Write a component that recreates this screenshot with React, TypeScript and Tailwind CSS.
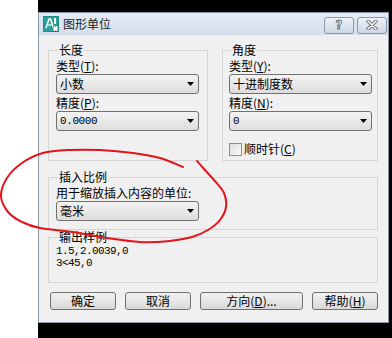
import React from 'react';

// points of the red hand-drawn loop (screen coords)
const LOOP: [number, number][] = [
  [183, 167], [160, 158], [133, 153], [100, 150], [70, 150], [43, 153], [22, 163], [7, 178],
  [1, 196], [8, 212], [22, 222], [40, 228], [73, 232], [107, 238], [140, 242], [170, 241],
  [192, 237], [208, 230], [220, 220], [226, 207], [224, 193], [214, 180], [204, 169], [197, 161],
];

function smoothPath(pts: [number, number][]) {
  let d = `M${pts[0][0]},${pts[0][1]}`;
  for (let i = 0; i < pts.length - 1; i++) {
    const p0 = pts[i - 1] || pts[i];
    const p1 = pts[i];
    const p2 = pts[i + 1];
    const p3 = pts[i + 2] || p2;
    const c1 = [p1[0] + (p2[0] - p0[0]) / 6, p1[1] + (p2[1] - p0[1]) / 6];
    const c2 = [p2[0] - (p3[0] - p1[0]) / 6, p2[1] - (p3[1] - p1[1]) / 6];
    d += ` C${c1[0]},${c1[1]} ${c2[0]},${c2[1]} ${p2[0]},${p2[1]}`;
  }
  return d;
}

const Legend: React.FC<{ children: React.ReactNode }> = ({ children }) => (
  <legend className="ml-[2px] px-[1px] leading-[14px]">{children}</legend>
);

const Combo: React.FC<{ value: string; mono?: boolean }> = ({ value, mono }) => (
  <div className="flex items-center justify-between w-[143px] h-[20px] rounded-[3px] border border-[#707070] bg-gradient-to-b from-[#f3f3f3] to-[#dddddd] pl-[3px] pr-[4px]">
    <span className={mono ? "font-[family-name:'Liberation_Mono',monospace] text-[11px] tracking-[-0.4px]" : ''}>{value}</span>
    <svg width="7" height="4" viewBox="0 0 7 4">
      <path d="M0 0h7L3.5 4z" fill="#000" />
    </svg>
  </div>
);

const Btn: React.FC<{ w: string; children: React.ReactNode }> = ({ w, children }) => (
  <button className={`${w} h-[18px] rounded-[3px] border border-[#707070] bg-gradient-to-b from-[#f2f2f2] to-[#d9d9d9] leading-[16px] text-center`}>
    {children}
  </button>
);

const Key: React.FC<{ k: string }> = ({ k }) => (
  <>
    (<span className="underline underline-offset-1">{k}</span>)
  </>
);

export default function App() {
  return (
    <div className="relative w-[392px] h-[338px] flex bg-white text-[12px] text-black font-[family-name:'Noto_Sans_CJK_SC','Noto_Sans',sans-serif] overflow-hidden">
      <div className="w-[38px] shrink-0 bg-white" />
      <div className="flex-1 flex flex-col bg-black">
        <div className="h-[12px] shrink-0" />
        <div className="w-[351px] h-[311px] border border-[#8d99a8] bg-[#f0f0f0] flex flex-col">
          {/* Title bar */}
          <div className="h-[22px] shrink-0 flex items-center pl-[4px] pr-[1px] bg-gradient-to-b from-[#e4ebf4] to-[#d4deea]">
            <svg width="16" height="16" viewBox="0 0 16 16">
              <rect x="0" y="0" width="16" height="16" fill="#1f8a86" />
              <rect x="1" y="1" width="14" height="14" fill="#2aa39c" />
              <path d="M3 12L6 3h1.5l3 9" stroke="#fff" strokeWidth="1.5" fill="none" />
              <path d="M4.5 9h4" stroke="#fff" strokeWidth="1.2" />
              <rect x="10" y="10" width="5" height="5" fill="#fff" stroke="#333" strokeWidth="0.8" strokeDasharray="1 1" />
              <rect x="11" y="2" width="2" height="6" fill="#fff" />
            </svg>
            <span className="ml-[4px] text-[#1e1e1e] leading-[14px]">图形单位</span>
            <div className="flex-1" />
            <div className="flex gap-[3px] mt-[2px]">
              <div className="w-[30px] h-[17px] rounded-[3px] border border-[#8a97aa] bg-gradient-to-b from-[#eef2f7] to-[#cdd7e4] flex items-center justify-center">
                <span className="font-[family-name:'DejaVu_Sans',sans-serif] font-bold text-[12px] leading-none text-white [-webkit-text-stroke:0.8px_#5a6472]">?</span>
              </div>
              <div className="w-[30px] h-[17px] rounded-[3px] border border-[#8a97aa] bg-gradient-to-b from-[#eef2f7] to-[#cdd7e4] flex items-center justify-center">
                <svg width="12" height="10" viewBox="0 0 12 10">
                  <path d="M2 1l8 8M10 1L2 9" stroke="#5a6472" strokeWidth="3.2" strokeLinecap="round" />
                  <path d="M2 1l8 8M10 1L2 9" stroke="#fff" strokeWidth="1.6" strokeLinecap="round" />
                </svg>
              </div>
            </div>
          </div>

          {/* Body */}
          <div className="flex-1 flex flex-col pt-[8px] pl-[9px]">
            <div className="flex gap-[14px]">
              <fieldset className="w-[160px] h-[118px] border border-[#d5d5d5] pl-[7px]">
                <Legend>长度</Legend>
                <div className="leading-[17px]">类型<Key k="T" />:</div>
                <Combo value="小数" />
                <div className="leading-[17px]">精度<Key k="P" />:</div>
                <Combo value="0.0000" mono />
              </fieldset>
              <fieldset className="w-[156px] h-[118px] border border-[#d5d5d5] pl-[6px]">
                <Legend>角度</Legend>
                <div className="leading-[17px]">类型<Key k="Y" />:</div>
                <Combo value="十进制度数" />
                <div className="leading-[17px]">精度<Key k="N" />:</div>
                <Combo value="0" mono />
                <div className="flex items-center mt-[11px] h-[14px]">
                  <div className="w-[13px] h-[13px] border border-[#8f8f8f] bg-gradient-to-br from-[#dcdcdc] to-[#fafafa]" />
                  <span className="ml-[2px] leading-[14px]">顺时针<Key k="C" /></span>
                </div>
              </fieldset>
            </div>

            <fieldset className="mt-[9px] w-[330px] h-[60px] border border-[#d5d5d5] pl-[7px]">
              <Legend>插入比例</Legend>
              <div className="leading-[17px]">用于缩放插入内容的单位:</div>
              <Combo value="毫米" />
            </fieldset>

            <fieldset className="w-[330px] h-[53px] border border-[#d5d5d5] pl-[7px]">
              <Legend>输出样例</Legend>
              <div className="font-[family-name:'Liberation_Mono',monospace] text-[11px] tracking-[-0.6px] leading-[12px] mt-[1px]">
                <div>1.5,2.0039,0</div>
                <div>3&lt;45,0</div>
              </div>
            </fieldset>

            <div className="flex gap-[9px] mt-[9px] ml-[2px]">
              <Btn w="w-[66px]">确定</Btn>
              <Btn w="w-[66px]">取消</Btn>
              <Btn w="w-[103px]">方向<Key k="D" />...</Btn>
              <Btn w="w-[66px]">帮助<Key k="H" /></Btn>
            </div>
          </div>
        </div>
      </div>

      {/* red hand-drawn annotation */}
      <svg className="absolute left-0 top-0 pointer-events-none" width="392" height="338" viewBox="0 0 392 338">
        <path d={smoothPath(LOOP)} stroke="#e3141c" strokeWidth="2" fill="none" strokeLinecap="round" strokeLinejoin="round" />
      </svg>
    </div>
  );
}
